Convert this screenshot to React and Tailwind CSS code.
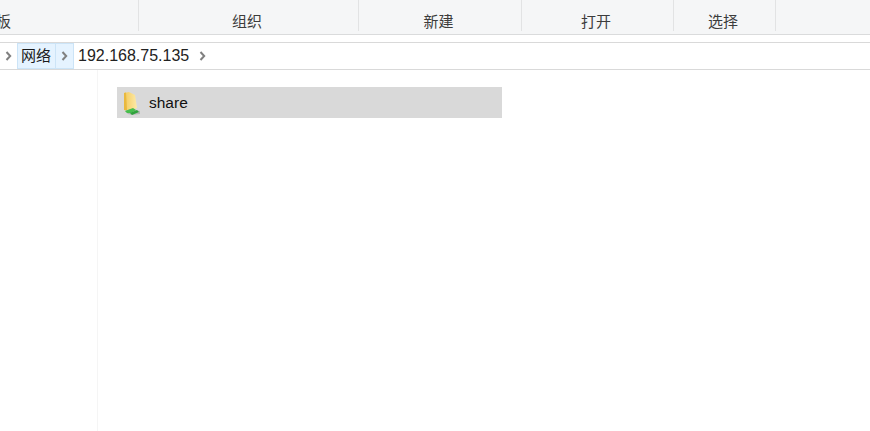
const FONT = "font-['Liberation_Sans','Noto_Sans_CJK_SC',sans-serif]";

const groups = [
  { label: "组织", width: "w-[220px]" },
  { label: "新建", width: "w-[163px]" },
  { label: "打开", width: "w-[152px]" },
  { label: "选择", width: "w-[102px]" },
];

function Chevron({ color = "#808080" }) {
  return (
    <svg width="7" height="10" viewBox="0 0 7 10" fill="none">
      <path d="M1.5 1 L5.2 5 L1.5 9" stroke={color} strokeWidth="2" />
    </svg>
  );
}

function ShareIcon() {
  return (
    <svg width="20" height="26" viewBox="0 0 20 26">
      <defs>
        <linearGradient id="folder" x1="0" y1="0" x2="1" y2="0">
          <stop offset="0" stopColor="#f3c95a" />
          <stop offset="1" stopColor="#fdeaa8" />
        </linearGradient>
      </defs>
      <path d="M2 3 L7 2 L11 4 L13 5 L15 18 L6 21 L2 20 Z" fill="url(#folder)" />
      <path d="M2 3 L4 2.5 L5 20 L2 20 Z" fill="#e9b93f" />
      <path d="M3 21 L9 19 L18 21 L18 24 L10 25 L6 24 Z" fill="#b4b8b4" />
      <path d="M3 21 L11 18 L14 20 L9 23 L5 23 Z" fill="#46bf4c" />
      <path d="M8 23 L15 20 L17 22 L10 25 Z" fill="#2fa33c" />
    </svg>
  );
}

export default function App() {
  return (
    <div className={`${FONT} flex h-[431px] w-[870px] flex-col overflow-hidden bg-white`}>
      <div className="flex h-[35px] shrink-0 border-b border-[#dadbdc] bg-[#f5f6f7] text-[15px] leading-[20px] text-[#3c3c3c]">
        <div className="flex h-[31px] w-[139px] shrink-0 items-end overflow-hidden border-r border-[#e2e3e4]">
          <span className="-ml-[4px] -mb-[1px]">板</span>
        </div>
        {groups.map((g) => (
          <div
            key={g.label}
            className={`${g.width} flex h-[31px] shrink-0 items-end justify-center border-r border-[#e2e3e4] pr-[3px]`}
          >
            <span className="-mb-[1px]">{g.label}</span>
          </div>
        ))}
      </div>

      <div className="mt-[7px] flex h-[28px] shrink-0 items-center border-y border-[#d9d9d9] text-[15px] text-[#1a1a1a]">
        <div className="flex w-[17px] justify-center">
          <Chevron />
        </div>
        <div className="flex h-full border border-[#cce4f7] bg-[#e5f3ff]">
          <span className="w-[37px] pr-[1px] text-center leading-[24px]">网络</span>
          <div className="flex w-[18px] items-center justify-center border-l border-[#cce4f7]">
            <Chevron />
          </div>
        </div>
        <span className="ml-[4px] text-[16px] text-[#222]">192.168.75.135</span>
        <div className="ml-[10px]">
          <Chevron />
        </div>
      </div>

      <div className="flex min-h-0 flex-1">
        <div className="w-[98px] shrink-0 border-r border-[#f5f5f5]" />
        <div className="pl-[19px] pt-[17px]">
          <div className="flex h-[31px] w-[385px] items-center bg-[#d9d9d9] pl-[5px]">
            <ShareIcon />
            <span className="ml-[7px] pt-[1px] text-[15.5px] text-[#111]">share</span>
          </div>
        </div>
      </div>
    </div>
  );
}
